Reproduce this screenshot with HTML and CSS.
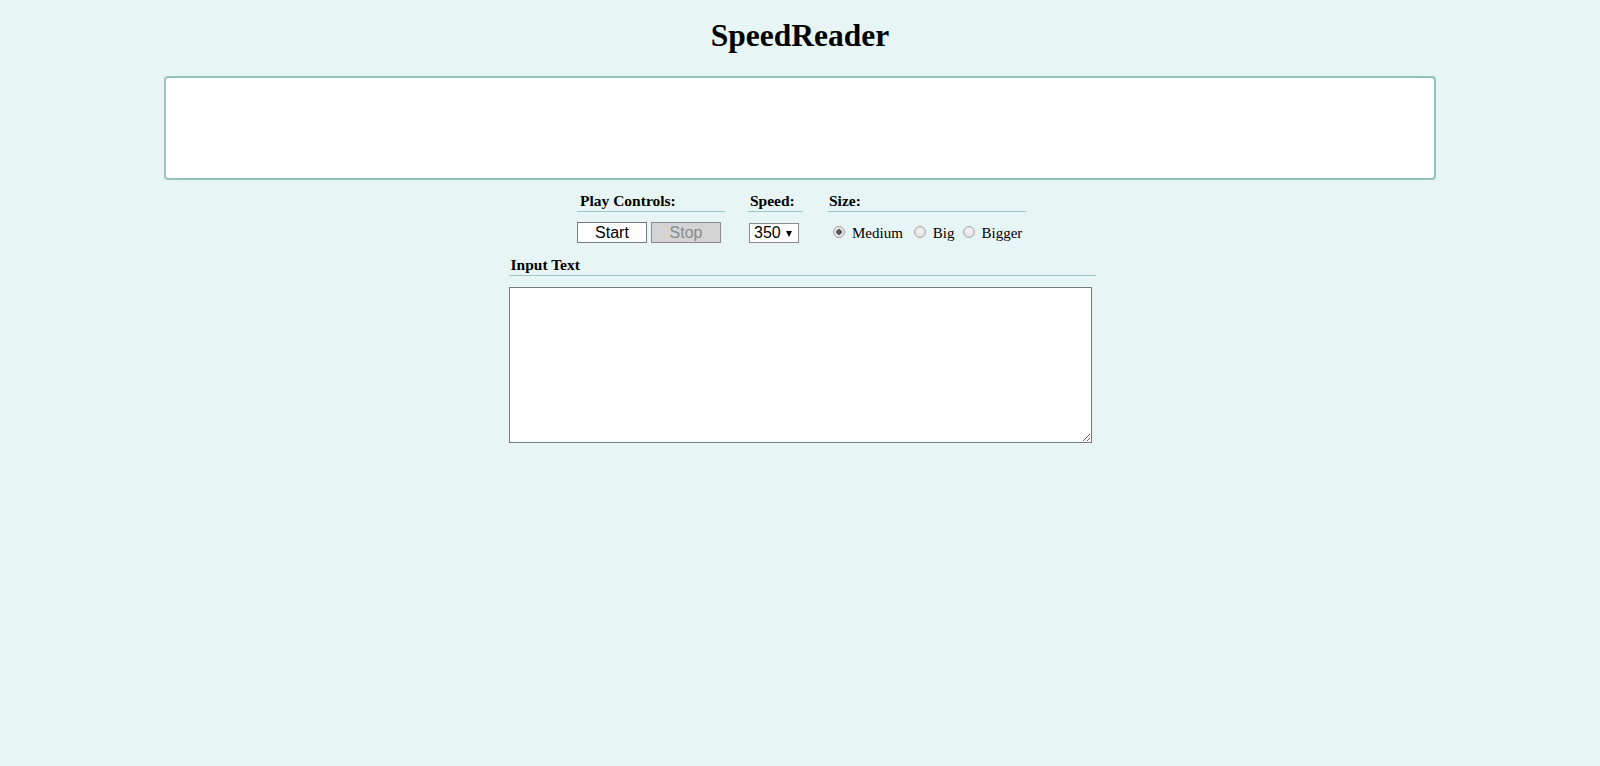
FILE: index.html
```html
<!DOCTYPE html>
<html>
<head>
<meta charset="utf-8">
<title>SpeedReader</title>
<link rel="stylesheet" href="styles.css">
</head>
<body>
<h1 class="title">SpeedReader</h1>
<div class="display"></div>
<div class="controls">
  <div class="group group-play">
    <div class="group-label">Play Controls:</div>
    <div class="group-body">
      <button class="btn">Start</button>
      <button class="btn" disabled>Stop</button>
    </div>
  </div>
  <div class="group group-speed">
    <div class="group-label">Speed:</div>
    <div class="group-body">
      <span class="select-wrap"><select class="speed-select"><option>350</option></select></span>
    </div>
  </div>
  <div class="group group-size">
    <div class="group-label">Size:</div>
    <div class="group-body radios">
      <label class="radio"><input type="radio" name="size" checked><span>Medium</span></label>
      <label class="radio"><input type="radio" name="size"><span>Big</span></label>
      <label class="radio"><input type="radio" name="size"><span>Bigger</span></label>
    </div>
  </div>
</div>
<div class="input-section">
  <div class="section-label">Input Text</div>
  <textarea class="input-text"></textarea>
</div>
</body>
</html>
```
FILE: styles.css
```css
html, body {
  margin: 0;
  padding: 0;
}
body {
  background: #e8f5f5;
  font-family: "Liberation Serif", "Times New Roman", serif;
  color: #000;
  min-height: 766px;
}
.title {
  margin: 16px 0 20px;
  font-size: 31.5px;
  line-height: 40px;
  font-weight: bold;
  text-align: center;
}
.display {
  margin: 0 164px;
  height: 100px;
  background: #fff;
  border: 2px solid #8fc5b9;
  border-left-color: #a3c3bd;
  border-bottom-color: #93c4b9;
  border-radius: 4px;
}
.controls {
  display: flex;
  justify-content: center;
  gap: 23px;
  margin-top: 11px;
  padding-left: 3px;
}
.group-label {
  font-size: 15.5px;
  font-weight: bold;
  line-height: 20px;
  padding-left: 3px;
  border-bottom: 1px solid #9fc6c1;
}
.group-body {
  display: flex;
  align-items: center;
  margin-top: 10px;
  height: 21px;
}
.group-play { width: 148px; }
.group-speed { width: 55px; }
.group-size { width: 198px; margin-left: 2px; }
.group-speed .group-label { padding-left: 2px; }
.group-size .group-label { padding-left: 1px; }
.btn {
  width: 70px;
  height: 21px;
  margin: 0 4px 0 0;
  padding: 0;
  font-family: "Liberation Sans", Arial, sans-serif;
  font-size: 16px;
  color: #000;
  background: #fff;
  border: 1px solid #7a7a7a;
  border-radius: 0;
}
.btn:disabled {
  background: #d4d4d4;
  color: #8a8a8a;
  border-color: #8a8a8a;
}
.select-wrap {
  position: relative;
  display: inline-block;
  margin-left: 1px;
}
.select-wrap::after {
  content: "";
  position: absolute;
  right: 7px;
  top: 8px;
  border-left: 3px solid transparent;
  border-right: 3px solid transparent;
  border-top: 6px solid #000;
  pointer-events: none;
}
.speed-select {
  -webkit-appearance: none;
  appearance: none;
  width: 50px;
  height: 20px;
  padding: 0 0 0 4px;
  font-family: "Liberation Sans", Arial, sans-serif;
  font-size: 16px;
  line-height: 18px;
  color: #000;
  background: #fff;
  border: 1px solid #8a8a8a;
  border-radius: 0;
  display: block;
}
.radio {
  display: inline-flex;
  align-items: center;
  font-size: 15px;
  margin-right: 9px;
}
.radio:nth-child(2) { margin-right: 6px; }
.radio span {
  position: relative;
  top: 1px;
}
.radio input {
  -webkit-appearance: none;
  appearance: none;
  box-sizing: border-box;
  width: 12px;
  height: 12px;
  margin: 0 7px 0 5px;
  border: 1px solid #a9a9a9;
  border-radius: 50%;
  background: radial-gradient(circle at 50% 40%, #f4f4f4 0%, #dcdcdc 100%);
  position: relative;
  top: -1px;
}
.radio + .radio input { margin-left: 2px; }
.radio input:checked {
  background: radial-gradient(circle, #555 0 2.5px, #e6e6e6 3px, #dcdcdc 100%);
}
.input-section {
  width: 587px;
  margin: 12px auto 0;
  position: relative;
  left: 2px;
}
.section-label {
  font-size: 15.5px;
  font-weight: bold;
  line-height: 20px;
  padding-left: 2px;
  border-bottom: 1px solid #9fc6c1;
}
.input-text {
  display: block;
  box-sizing: border-box;
  width: 583px;
  height: 156px;
  margin: 11px 0 0 0;
  border: 1px solid #7a7a7a;
  background: #fff;
  padding: 2px;
}
```
